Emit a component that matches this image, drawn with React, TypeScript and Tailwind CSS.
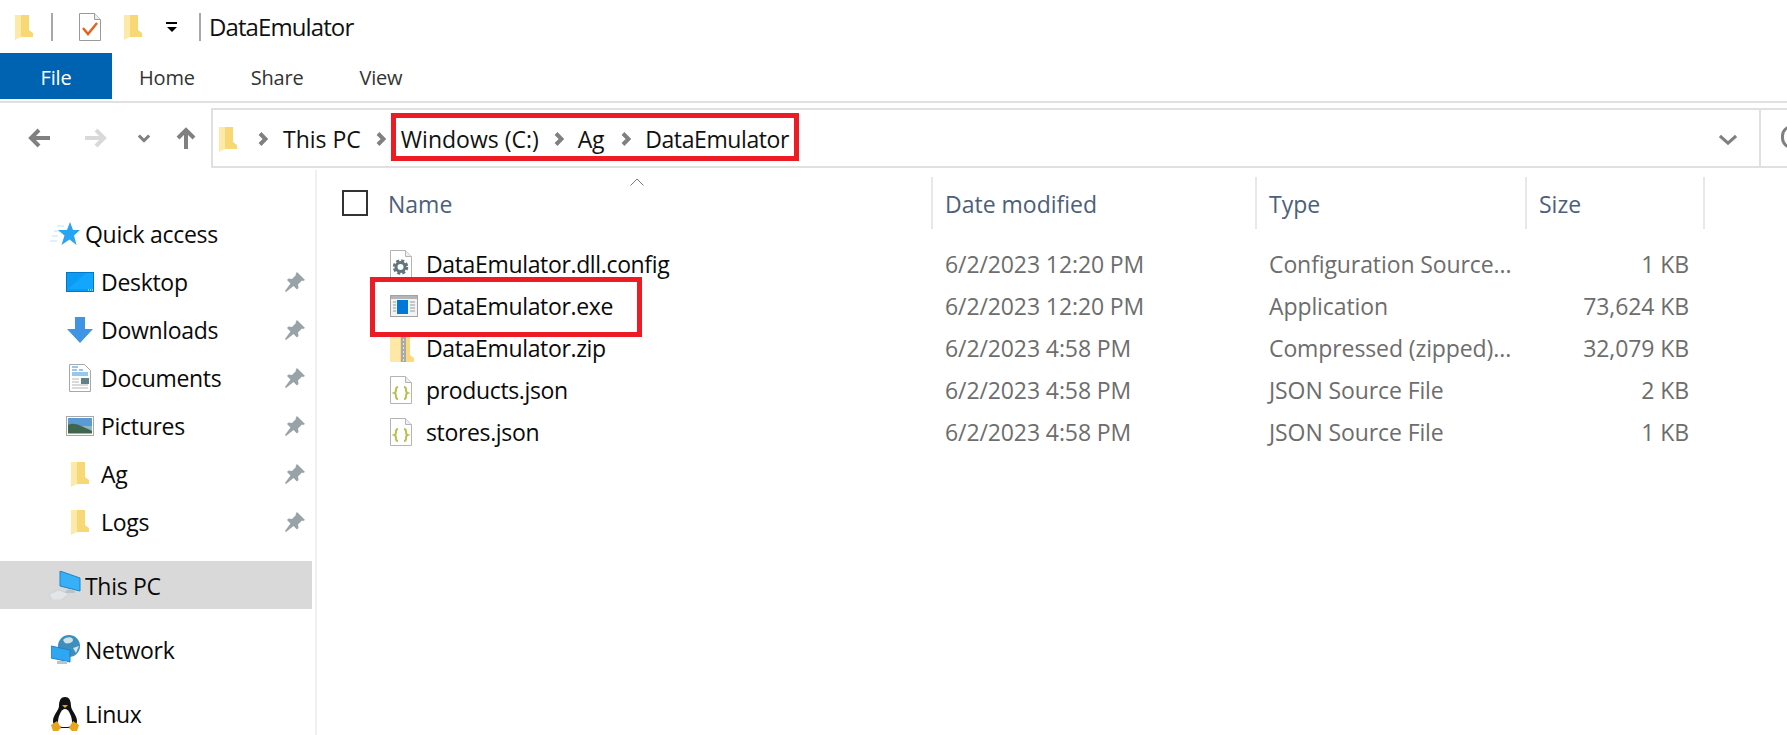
const Folder = ({ className = 'w-[18px] h-[26px]' }: { className?: string }) => (
    <svg viewBox="0 0 18 26" className={className}>
        <path d="M4 1h10v15l4 3v4H4z" fill="#f8d775" />
        <path d="M0 1h6v22l-6 3z" fill="#ffe9a8" />
    </svg>
);

const Pin = () => (
    <svg viewBox="0 0 20 20" className="w-[20px] h-[20px]">
        <path d="M12 0l8 8-2 1-1-.5-4 4 .5 3.5-1.5 1.5-3.5-3.5L1 20l-1-1 5.500-7.500L2 8l1.500-1.500L7 7l4-4-.5-1z" fill="#98a2a8" />
    </svg>
);

const Chevron = () => (
    <svg viewBox="0 0 10 14" className="w-[10px] h-[14px] shrink-0">
        <path d="M2 1.500L7.500 7 2 12.500" fill="none" stroke="#808080" strokeWidth="4" />
    </svg>
);

const Arrow = ({ color, rotate }: { color: string; rotate: string }) => (
    <svg viewBox="0 0 22 22" className={`w-[22px] h-[22px] ${rotate}`}>
        <path d="M2 11h20M11 3l-8 8 8 8" fill="none" stroke={color} strokeWidth="4" />
    </svg>
);

const SmallDown = () => (
    <svg viewBox="0 0 14 10" className="w-[12px] h-[9px]">
        <path d="M1 1.500l6 6 6-6" fill="none" stroke="#808080" strokeWidth="3.500" />
    </svg>
);

const Star = () => (
    <svg viewBox="0 0 30 24" className="w-[30px] h-[24px]">
        <path d="M0 19h7M2 14h6M4 9h6M7 4h7" stroke="#bfe3fb" strokeWidth="1" />
        <path d="M20 0l3 8h7l-6 5.500 2.500 9.500-7-5.500-8 5.500 3-9.500L8 8h9z" fill="#27a4f2" />
    </svg>
);

const Desktop = () => (
    <svg viewBox="0 0 28 20" className="w-[28px] h-[20px]">
        <rect x="0.500" y="0.500" width="27" height="19" fill="#0a9bf5" stroke="#0078c8" />
        <path d="M1 18L20 1h7v16H1z" fill="#12a6ff" />
        <path d="M22 18h5" stroke="#fff" strokeDasharray="1 1" />
    </svg>
);

const Download = () => (
    <svg viewBox="0 0 26 26" className="w-[26px] h-[26px]">
        <path d="M8 0h10v12h8L13 26 0 12h8z" fill="#3f95e3" />
    </svg>
);

const DocumentsIcon = () => (
    <svg viewBox="0 0 22 28" className="w-[22px] h-[28px]">
        <path d="M.5.500h15l6 6v21H.5z" fill="#fff" stroke="#a8a8a8" />
        <path d="M3 3h6M3 6h5M10 6h4M3 9h16M3 11h16" stroke="#2f8fdc" strokeWidth="1.200" />
        <rect x="12" y="14" width="8" height="6" fill="#62808a" />
        <path d="M3 15h7M3 18h7M3 21h16M3 24h16" stroke="#b5b5b5" />
    </svg>
);

const PicturesIcon = () => (
    <svg viewBox="0 0 28 20" className="w-[28px] h-[20px]">
        <rect x="0.500" y="0.500" width="27" height="19" fill="#fff" stroke="#a8a8a8" />
        <rect x="2" y="2" width="24" height="9" fill="#5a9bd6" />
        <rect x="2" y="10" width="24" height="8" fill="#8fb6c8" />
        <path d="M2 9c6-3 11 0 24 6v2H2z" fill="#41664e" />
    </svg>
);

const ThisPc = () => (
    <svg viewBox="0 0 32 29" className="w-[32px] h-[29px]">
        <path d="M11 0l20 7v13l-20-5z" fill="#38b0f8" stroke="#1d84c8" />
        <path d="M20 18l6 2v2H14z" fill="#b9c3c9" />
        <path d="M0 23l10-4 10 4-8 6H3z" fill="#e3e5e6" stroke="#c0c4c7" strokeWidth="0.500" />
    </svg>
);

const NetworkIcon = () => (
    <svg viewBox="0 0 30 30" className="w-[30px] h-[30px]">
        <circle cx="18" cy="11" r="11" fill="#3f8fbd" />
        <path d="M12 5c4-4 10-3 10 0s-6 4-8 3zM22 13l6-2-3 7z" fill="#cfe3ee" />
        <path d="M0 11l19 4v12L0 23z" fill="#2ea6f2" stroke="#1d84c8" />
        <path d="M6 26h10v3H6z" fill="#b9c3c9" />
    </svg>
);

const Penguin = () => (
    <svg viewBox="0 0 28 34" className="w-[28px] h-[34px]">
        <path d="M14 0c5 0 6 5 6 9s6 9 6 15-5 7-12 7-12-1-12-7 6-11 6-15 1-9 6-9z" fill="#111" />
        <path d="M14 12c4 0 7 8 7 13s-3 5-7 5-7 0-7-5 3-13 7-13z" fill="#fff" />
        <path d="M11 8h6l-3 3z" fill="#e8a51c" />
        <path d="M0 28l6-4 4 7-3 3H2zM28 28l-6-4-4 7 3 3h5z" fill="#e8a51c" />
    </svg>
);

const PageIcon = ({ children }: { children: React.ReactNode }) => (
    <svg viewBox="0 0 22 28" className="w-[22px] h-[28px]">
        <path d="M.5.500h15l6 6v21H.5z" fill="#fff" stroke="#b4b4b4" />
        <path d="M15.500.500v6h6" fill="#eee" stroke="#b4b4b4" />
        {children}
    </svg>
);

const ConfigIcon = () => (
    <PageIcon>
        <circle cx="10.500" cy="17" r="4.500" fill="none" stroke="#60757f" strokeWidth="3" />
        <circle cx="10.500" cy="17" r="6.500" fill="none" stroke="#60757f" strokeWidth="2.500" strokeDasharray="3 2.100" />
    </PageIcon>
);

const JsonIcon = () => (
    <PageIcon>
        <path d="M8 11c-2 0-2 1-2 2.500s0 3-1.500 3.500C6 17.500 6 19 6 20.500S6 23 8 23M14 11c2 0 2 1 2 2.500s0 3 1.500 3.500c-1.500.5-1.500 2-1.500 3.500s0 2.500-2 2.500" fill="none" stroke="#b9c04e" strokeWidth="2" />
    </PageIcon>
);

const ExeIcon = () => (
    <svg viewBox="0 0 28 22" className="w-[28px] h-[22px]">
        <rect x="0.500" y="0.500" width="27" height="21" fill="#f3f3f3" stroke="#a2a2a2" />
        <rect x="1" y="1" width="26" height="3" fill="#b5b5b5" />
        <rect x="7" y="5" width="11" height="14" fill="#0078d7" />
        <path d="M3 7h3M3 10h3M3 13h3M3 16h3M20 7h5M20 10h5M20 13h5M20 16h5" stroke="#9a9a9a" />
    </svg>
);

const ZipIcon = () => (
    <svg viewBox="0 0 24 28" className="w-[24px] h-[28px]">
        <path d="M0 2h20v19l4 3v4H0z" fill="#fbd97c" />
        <path d="M0 2h10v26H0z" fill="#ffe8a6" />
        <rect x="11" y="0" width="5" height="28" fill="#a9a9a9" />
        <path d="M13.500 1v26" stroke="#e8e8e8" strokeDasharray="2 2" />
    </svg>
);

const CheckFile = () => (
    <svg viewBox="0 0 22 28" className="w-[22px] h-[28px]">
        <path d="M.5.500h15l6 6v21H.5z" fill="#fff" stroke="#9a9a9a" />
        <path d="M15.500.500v6h6" fill="#eee" stroke="#9a9a9a" />
        <path d="M4 15l5 6 9-11" fill="none" stroke="#e8601c" strokeWidth="2.400" />
    </svg>
);

const quickLinks = [
    { label: 'Desktop', icon: <Desktop /> },
    { label: 'Downloads', icon: <Download /> },
    { label: 'Documents', icon: <DocumentsIcon /> },
    { label: 'Pictures', icon: <PicturesIcon /> },
    { label: 'Ag', icon: <Folder /> },
    { label: 'Logs', icon: <Folder /> },
];

const files = [
    { name: 'DataEmulator.dll.config', date: '6/2/2023 12:20 PM', type: 'Configuration Source...', size: '1 KB', icon: <ConfigIcon /> },
    { name: 'DataEmulator.exe', date: '6/2/2023 12:20 PM', type: 'Application', size: '73,624 KB', icon: <ExeIcon /> },
    { name: 'DataEmulator.zip', date: '6/2/2023 4:58 PM', type: 'Compressed (zipped)...', size: '32,079 KB', icon: <ZipIcon /> },
    { name: 'products.json', date: '6/2/2023 4:58 PM', type: 'JSON Source File', size: '2 KB', icon: <JsonIcon /> },
    { name: 'stores.json', date: '6/2/2023 4:58 PM', type: 'JSON Source File', size: '1 KB', icon: <JsonIcon /> },
];

const App = () => {
    return (
        <div className="w-[1787px] h-[735px] overflow-hidden bg-white text-[23px] tracking-[-0.3px] text-[#111] font-['Open_Sans',sans-serif]">
            {/* title bar */}
            <div className="h-[53px] flex items-center pl-[15px]">
                <Folder />
                <div className="w-[2px] h-[28px] bg-[#a8a8a8] ml-[18px]" />
                <div className="ml-[26px]"><CheckFile /></div>
                <div className="ml-[23px]"><Folder /></div>
                <div className="ml-[24px] flex flex-col items-center gap-[3px]">
                    <div className="w-[11px] h-[2px] bg-black" />
                    <div className="w-0 h-0 border-x-[5px] border-x-transparent border-t-[5px] border-t-black" />
                </div>
                <div className="w-[2px] h-[28px] bg-[#a8a8a8] ml-[22px]" />
                <span className="ml-[8px] text-[24px] tracking-[-0.9px]">DataEmulator</span>
            </div>

            {/* ribbon tabs */}
            <div className="h-[50px] border-b-2 border-[#e0e0e0] flex items-start text-[#333] text-[20px] tracking-[-0.2px]">
                <div className="w-[112px] h-[46px] pt-[3px] bg-[#0063b1] text-white flex items-center justify-center">File</div>
                <div className="h-[46px] pt-[3px] flex items-center ml-[27px]">Home</div>
                <div className="h-[46px] pt-[3px] flex items-center ml-[56px]">Share</div>
                <div className="h-[46px] pt-[3px] flex items-center ml-[56px]">View</div>
            </div>

            {/* address bar */}
            <div className="h-[67px] flex items-start pt-[5px]">
                <div className="w-[211px] h-[60px] flex items-center pl-[28px]">
                    <Arrow color="#808080" rotate="" />
                    <div className="ml-[35px]"><Arrow color="#d9d9d9" rotate="rotate-180" /></div>
                    <div className="ml-[31px]"><SmallDown /></div>
                    <div className="ml-[25px]"><Arrow color="#808080" rotate="rotate-90" /></div>
                </div>
                <div className="flex-1 h-[60px] border-2 border-r-0 border-[#e0e0e0] flex items-center pl-[6px] pt-[2px] relative">
                    <Folder className="w-[18px] h-[26px]" />
                    <div className="ml-[21px]"><Chevron /></div>
                    <span className="ml-[15px] tracking-[0px]">This PC</span>
                    <div className="ml-[15px]"><Chevron /></div>
                    <span className="ml-[15px] tracking-[0px]">Windows (C:)</span>
                    <div className="ml-[15px]"><Chevron /></div>
                    <span className="ml-[14px]">Ag</span>
                    <div className="ml-[17px]"><Chevron /></div>
                    <span className="ml-[14px] tracking-[-0.4px]">DataEmulator</span>

                    <div className="absolute left-[178px] top-[3px] w-[408px] h-[48px] border-[5px] border-[#ed1c24]" />

                    <div className="ml-auto mr-[50px]">
                        <svg viewBox="0 0 20 12" className="w-[18px] h-[11px]">
                            <path d="M1 2l9 8 9-8" fill="none" stroke="#808080" strokeWidth="3.500" />
                        </svg>
                    </div>
                    <div className="absolute left-[1546px] top-0 bottom-0 w-[2px] bg-[#e0e0e0]" />
                    <div className="absolute left-[1568px] top-[15px] w-[22px] h-[24px] rounded-full border-[3px] border-[#808080]" />
                </div>
            </div>

            <div className="flex h-[565px]">
                {/* sidebar */}
                <div className="w-[317px] h-full pr-[3px] border-r-2 border-[#f0f0f0] shrink-0 text-[#0a0a0a]">
                    <div className="mt-[40px] h-[48px] flex items-center pl-[50px]">
                        <Star />
                        <span className="ml-[5px]">Quick access</span>
                    </div>
                    {quickLinks.map((link) => (
                        <div key={link.label} className="h-[48px] flex items-center">
                            <div className="w-[101px] pl-[66px] pr-[7px] flex justify-center">{link.icon}</div>
                            <span>{link.label}</span>
                            <div className="ml-auto mr-[7px]"><Pin /></div>
                        </div>
                    ))}
                    <div className="mt-[15px] h-[48px] bg-[#d9d9d9] flex items-center pl-[49px]">
                        <ThisPc />
                        <span className="ml-[4px] pt-[2px]">This PC</span>
                    </div>
                    <div className="mt-[17px] h-[48px] flex items-center pl-[51px]">
                        <NetworkIcon />
                        <span className="ml-[4px] pt-[1px]">Network</span>
                    </div>
                    <div className="mt-[16px] h-[48px] flex items-center pl-[51px]">
                        <Penguin />
                        <span className="ml-[6px] pt-[1px]">Linux</span>
                    </div>
                </div>

                {/* file list */}
                <div className="flex-1 relative">
                    <div className="absolute left-[313px] top-[8px] w-[14px] h-[8px]">
                        <svg viewBox="0 0 14 8" className="w-[14px] h-[8px]">
                            <path d="M.5 7.500L7 1l6.500 6.500" fill="none" stroke="#777" />
                        </svg>
                    </div>
                    <div className="mt-[7px] h-[52px] flex items-center text-[#4c607a] tracking-[0px]">
                        <div className="w-[614px] shrink-0 flex items-center pl-[25px]">
                            <div className="w-[26px] h-[26px] border-[2px] border-[#333]" />
                            <span className="ml-[20px] pt-[2px]">Name</span>
                        </div>
                        <div className="w-[324px] shrink-0 h-full border-l-2 border-[#e8e8e8] pl-[12px] pt-[2px] flex items-center">Date modified</div>
                        <div className="w-[270px] shrink-0 h-full border-l-2 border-[#e8e8e8] pl-[12px] pt-[2px] flex items-center">Type</div>
                        <div className="w-[180px] shrink-0 h-full border-x-2 border-[#e8e8e8] pl-[12px] pt-[2px] flex items-center">Size</div>
                    </div>
                    <div className="mt-[14px] relative">
                        {files.map((file) => (
                            <div key={file.name} className="h-[42px] flex items-center text-[#6d6d6d] tracking-[-0.1px]">
                                <div className="w-[614px] shrink-0 flex items-center text-[#0a0a0a] tracking-[-0.35px]">
                                    <div className="w-[109px] pl-[73px] flex justify-start">{file.icon}</div>
                                    <span>{file.name}</span>
                                </div>
                                <div className="w-[324px] shrink-0 pl-[14px]">{file.date}</div>
                                <div className="w-[270px] shrink-0 pl-[14px] whitespace-nowrap">{file.type}</div>
                                <div className="w-[164px] shrink-0 text-right">{file.size}</div>
                            </div>
                        ))}
                        <div className="absolute left-[53px] top-[34px] w-[272px] h-[60px] border-[5px] border-[#ed1c24]" />
                    </div>
                </div>
            </div>
        </div>
    );
};

export default App;
